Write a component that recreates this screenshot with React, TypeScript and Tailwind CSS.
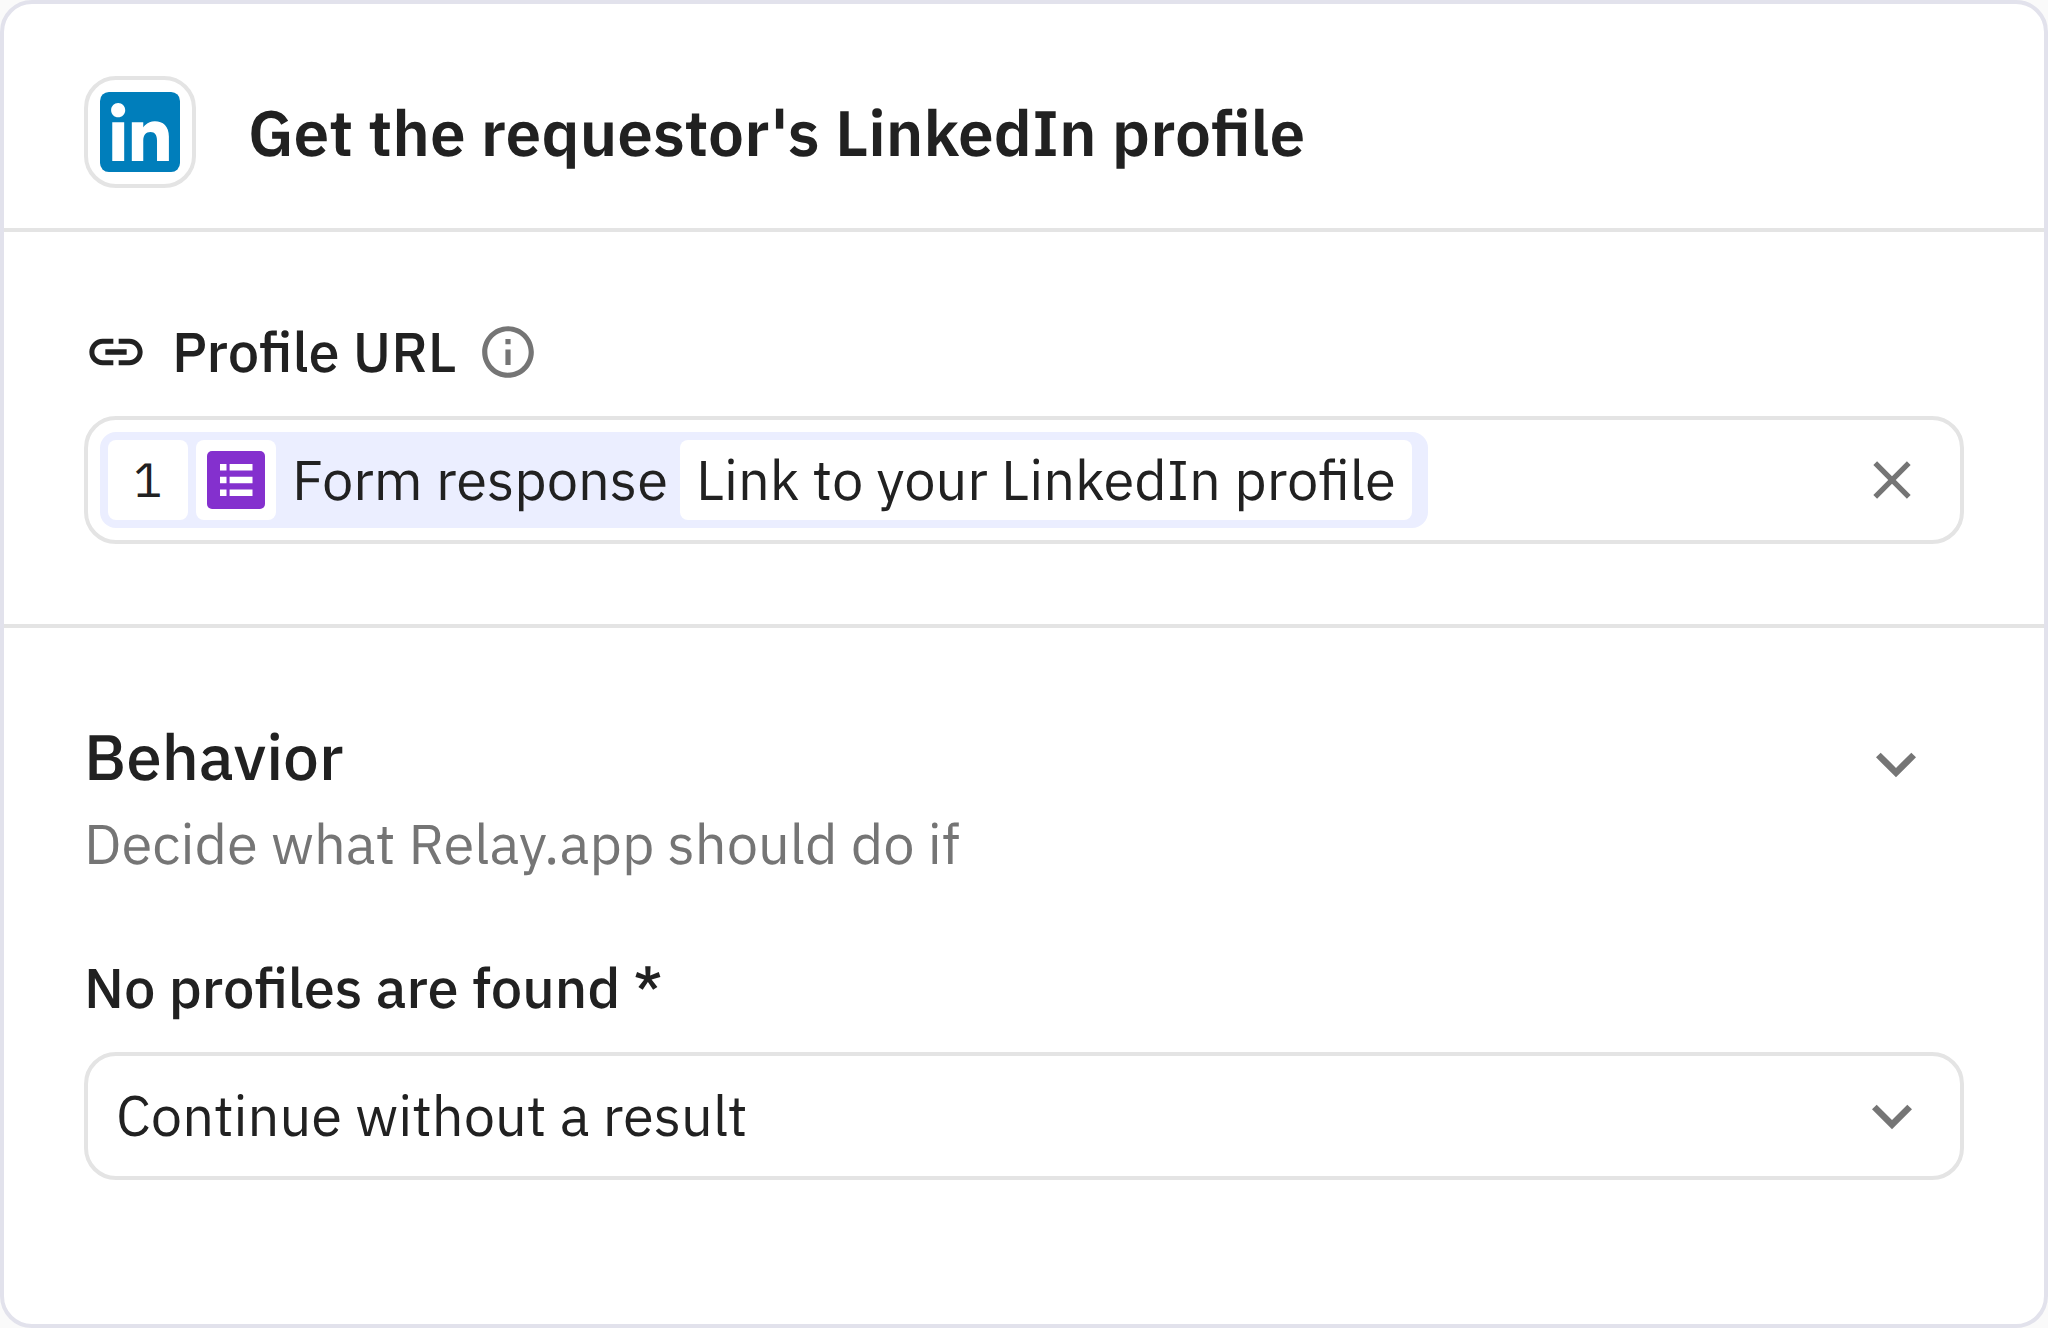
import React, { useState } from "react";
import { MdClose, MdExpandMore, MdInfoOutline, MdLink } from "react-icons/md";

const LinkedInLogo = () => (
  <svg viewBox="0 0 72 72" className="size-20" aria-hidden="true">
    <rect width="72" height="72" rx="8" fill="#007ebb" />
    <path
      fill="#fff"
      d="M62 62H51.316V43.802c0-4.989-1.896-7.777-5.845-7.777-4.296 0-6.541 2.901-6.541 7.777V62H28.633V27.333H38.93v4.67s3.096-5.729 10.453-5.729C56.736 26.274 62 30.764 62 40.051V62ZM16.35 22.794c-3.508 0-6.35-2.864-6.35-6.397S12.842 10 16.35 10c3.507 0 6.347 2.864 6.347 6.397s-2.84 6.397-6.347 6.397ZM11.033 62H21.77V27.333H11.033V62Z"
    />
  </svg>
);

const FormIcon = () => (
  <svg viewBox="0 0 58 58" className="size-[58px]" aria-hidden="true">
    <rect width="58" height="58" rx="5" fill="#8430ce" />
    <g fill="#fff">
      <path d="M13 13h6.5v6.4H13zM13 25.8h6.5v6.4H13zM13 38.6h6.5V45H13z" />
      <path d="M22.6 13h22.9v6.4H22.6zM22.6 25.8h22.9v6.4H22.6zM22.6 38.6h22.9V45H22.6z" />
    </g>
  </svg>
);

const Header = () => (
  <header className="flex items-center gap-[52px] border-b-4 border-[#e4e4e4] px-20 pt-[72px] pb-10">
    <div className="flex size-28 shrink-0 items-center justify-center rounded-[32px] border-4 border-[#e4e4e4]">
      <LinkedInLogo />
    </div>
    <h1 className="text-[64px] leading-20 font-semibold">
      Get the requestor's LinkedIn profile
    </h1>
  </header>
);

const ProfileUrl = () => {
  const [filled, setFilled] = useState(true);

  return (
    <section className="border-b-4 border-[#e4e4e4] px-20 pt-[88px] pb-20">
      <div className="flex items-center gap-5">
        <label
          htmlFor="profile-url"
          className="flex items-center gap-6 text-[56px] leading-16 font-medium"
        >
          <MdLink className="size-16" />
          Profile URL
        </label>
        <button type="button" aria-label="About Profile URL" className="text-[#757575]">
          <MdInfoOutline className="size-[62px]" />
        </button>
      </div>

      <div className="mt-8 flex h-32 items-center rounded-[32px] border-4 border-[#e4e4e4] pr-9 pl-3">
        {filled && (
          <div className="flex h-24 shrink-0 items-center gap-2 rounded-2xl bg-[#ebeeff] pr-4 pl-2 text-[56px] leading-20">
            <span className="flex size-20 items-center justify-center rounded-lg bg-white text-5xl">
              1
            </span>
            <span className="flex size-20 items-center justify-center rounded-lg bg-white">
              <FormIcon />
            </span>
            <span className="pr-1 pl-2">Form response</span>
            <span className="rounded-lg bg-white px-4">Link to your LinkedIn profile</span>
          </div>
        )}
        <input
          id="profile-url"
          type="text"
          className="h-20 min-w-0 flex-1 bg-transparent px-4 text-[56px] outline-none"
        />
        <button
          type="button"
          aria-label="Clear"
          onClick={() => setFilled(false)}
          className="text-[#757575]"
        >
          <MdClose className="size-16" />
        </button>
      </div>
    </section>
  );
};

const Behavior = () => {
  const [open, setOpen] = useState(true);

  return (
    <section className="px-20 pt-[88px] pb-20">
      <div className="flex items-start justify-between pr-7">
        <div>
          <h2 className="text-[64px] leading-20 font-medium">Behavior</h2>
          <p className="mt-3 text-[56px] leading-[72px] text-[#757575]">
            Decide what Relay.app should do if
          </p>
        </div>
        <button
          type="button"
          aria-label="Toggle behavior"
          aria-expanded={open}
          onClick={() => setOpen(!open)}
          className="mt-2 text-[#757575]"
        >
          <MdExpandMore className="size-20" />
        </button>
      </div>

      {open && (
        <div className="mt-[72px]">
          <label htmlFor="no-profiles" className="block text-[56px] leading-[72px] font-medium">
            No profiles are found *
          </label>
          <div className="relative mt-7">
            <select
              id="no-profiles"
              className="h-32 w-full appearance-none rounded-[32px] border-4 border-[#e4e4e4] bg-white pr-32 pb-0.5 pl-7 text-[56px] outline-none"
            >
              <option>Continue without a result</option>
            </select>
            <MdExpandMore className="pointer-events-none absolute inset-y-6 right-8 size-20 text-[#757575]" />
          </div>
        </div>
      )}
    </section>
  );
};

export default function App() {
  return (
    <div className="bg-[#fafafa] font-['IBM_Plex_Sans',Roboto,sans-serif] text-[#212121] [text-rendering:geometricPrecision]">
      <main className="min-h-screen w-full rounded-[32px] border-4 border-[#e2e2ec] bg-white">
        <Header />
        <ProfileUrl />
        <Behavior />
      </main>
    </div>
  );
}
